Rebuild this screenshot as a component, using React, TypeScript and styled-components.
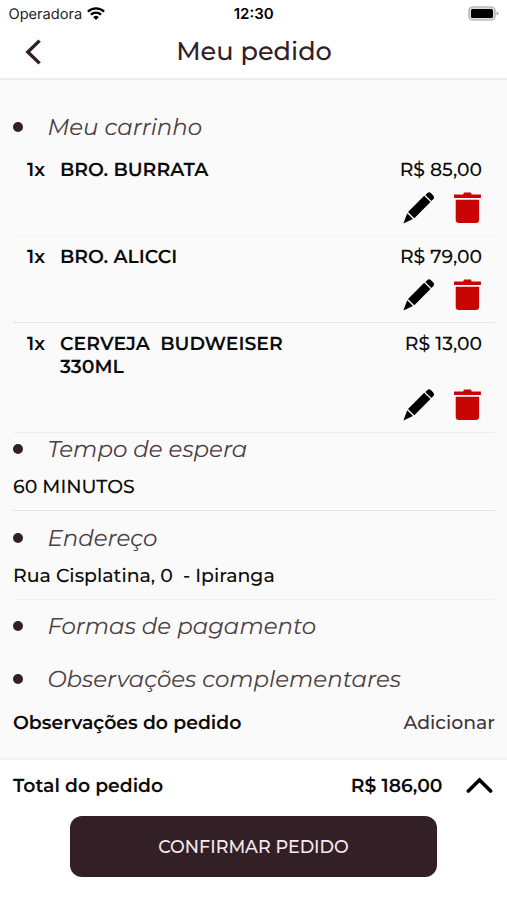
import React from "react";
import styled, { createGlobalStyle } from "styled-components";

const GlobalStyle = createGlobalStyle`
  * { box-sizing: border-box; }
  body {
    margin: 0;
    background: #fff;
    color: #0b0b0b;
    font-family: Montserrat, Inter, "Open Sans", sans-serif;
    text-rendering: geometricPrecision;
  }
`;

const WINE = "#331f26";

const Screen = styled.div`
  display: flex;
  flex-direction: column;
  height: 900px;
  overflow: hidden;
`;

const StatusBar = styled.div`
  display: grid;
  grid-template-columns: 1fr auto 1fr;
  align-items: center;
  height: 27px;
  padding: 0 8px 0 8.5px;
  font-family: Inter, sans-serif;
  font-size: 14.6px;
  color: #222;
`;

const Carrier = styled.div`
  display: flex;
  align-items: center;
  gap: 5px;
`;

const Clock = styled.div`
  font-size: 15px;
  font-weight: 600;
  color: #000;
`;

const BatterySlot = styled.div`
  display: flex;
  justify-content: flex-end;
`;

const Header = styled.header`
  display: grid;
  grid-template-columns: 66px 1fr 66px;
  align-items: center;
  height: 53px;
  border-bottom: 2px solid #ebebeb;
  padding-bottom: 2px;
`;

const BackButton = styled.button`
  display: flex;
  width: 66px;
  padding: 0 0 0 24px;
  border: 0;
  background: none;
`;

const Title = styled.h1`
  margin: 0;
  padding-left: 1px;
  text-align: center;
  font-size: 25.6px;
  line-height: 32px;
  font-weight: 500;
  color: ${WINE};
`;

const Content = styled.main`
  flex: 1;
  padding: 31px 12px 0 13px;
  background: #fafafa;
`;

const Heading = styled.h2<{ $top?: number }>`
  display: flex;
  align-items: center;
  gap: 24.4px;
  height: 32px;
  margin: ${(p) => p.$top ?? 0}px 0 0;
  font-size: 22.9px;
  font-style: italic;
  font-weight: 400;
  white-space: nowrap;
  color: #4b4043;

  &::before {
    content: "";
    width: 10px;
    height: 10px;
    border-radius: 50%;
    background: ${WINE};
  }
`;

const Cart = styled.ul`
  list-style: none;
  margin: 6px 0 0;
  padding: 0;
`;

const CartItem = styled.li<{ $line: string }>`
  display: grid;
  grid-template-columns: 33px 1fr auto;
  row-gap: 11px;
  padding: 9px 13px 11px 14px;
  border-bottom: 1px solid ${(p) => p.$line};
  font-size: 18.85px;
  line-height: 23px;
`;

const Quantity = styled.span`
  font-weight: 600;
`;

const Name = styled.span`
  max-width: 240px;
  font-weight: 600;
  white-space: pre-wrap;
`;

const Price = styled.span`
  font-size: 18.8px;
  font-weight: 500;
`;

const Actions = styled.div`
  grid-column: 1 / -1;
  display: flex;
  justify-content: flex-end;
  gap: 19px;
  height: 32px;
`;

const IconButton = styled.button`
  display: flex;
  padding: 0;
  border: 0;
  background: none;
`;

const Detail = styled.p<{ $line: string }>`
  height: 46px;
  margin: 0;
  border-bottom: 1px solid ${(p) => p.$line};
  font-size: 18.9px;
  line-height: 44px;
  font-weight: 500;
  white-space: pre;
`;

const NotesRow = styled.div`
  display: flex;
  align-items: center;
  justify-content: space-between;
  height: 44px;
  margin-top: 5px;
  font-size: 18.85px;
`;

const NotesLabel = styled.span`
  font-weight: 600;
`;

const AddLink = styled.a`
  font-weight: 500;
  color: #43353a;
`;

const Footer = styled.footer`
  position: relative;
  display: flex;
  flex-direction: column;
  align-items: center;
  height: 140px;
  background: #fff;
  box-shadow: 0 -1px 4px rgba(0, 0, 0, 0.07);
`;

const TotalRow = styled.div`
  display: flex;
  align-items: center;
  width: 100%;
  height: 50px;
  padding: 0 14px 0 13px;
  font-size: 18.8px;
  font-weight: 600;
`;

const TotalLabel = styled.span`
  flex: 1;
`;

const TotalValue = styled.span`
  margin-right: 23.5px;
`;

const ConfirmButton = styled.button`
  width: 367px;
  height: 61px;
  margin: 6px 0 0;
  border: 0;
  border-radius: 12px;
  background: ${WINE};
  color: #f6e9ee;
  font: inherit;
  font-size: 17.55px;
  font-weight: 500;
`;

const WifiIcon = () => (
  <svg width="18" height="14" viewBox="0 0 18 14" fill="none" stroke="#000" strokeWidth="2.3">
    <path d="M.9 4.6a11.7 11.7 0 0 1 16.2 0" />
    <path d="M3.9 7.7a7.4 7.4 0 0 1 10.2 0" />
    <path d="M9 13 6.2 10.2a4 4 0 0 1 5.6 0z" fill="#000" stroke="none" />
  </svg>
);

const BatteryIcon = () => (
  <svg width="31" height="15" viewBox="0 0 31 15">
    <rect x="1" y="1" width="26" height="13" rx="3.8" fill="#ddd" stroke="#bdbdbd" strokeWidth="1.7" />
    <rect x="3" y="3" width="22" height="9" rx="1.6" fill="#000" />
    <path d="M28.6 5.2q2 .7 2 2.2t-2 2.2z" fill="#aaa" />
  </svg>
);

const BackIcon = () => (
  <svg width="18" height="26" viewBox="0 0 18 26" fill="none" stroke={WINE} strokeWidth="3.4">
    <path d="M15.6 1.6 3.8 13l11.8 11.4" />
  </svg>
);

const PencilIcon = () => (
  <svg width="32" height="32" viewBox="0 0 32 32">
    <path d="M22.3 2.9 24.5.9q1.6-1.2 3.4.1l2.3 2.4q1.5 1.9.3 3.5L28.4 9z" />
    <path d="M21.2 3.8 27.5 10.1 11.3 26.3 5 20.1z" />
    <path d="M4.2 21.2 10 27 .4 31.4z" />
  </svg>
);

const TrashIcon = () => (
  <svg width="28" height="32" viewBox="0 0 28 32" fill="#c90404">
    <path d="M0 2.4h9.2L10 .5h6.8l.9 1.9h9.2v3.7H0z" />
    <path d="M1.7 7.8h23.4v20q0 3.2-3.2 3.2H4.9q-3.2 0-3.2-3.2z" />
  </svg>
);

const ChevronUpIcon = () => (
  <svg width="27" height="17" viewBox="0 0 27 17" fill="none" stroke="#000" strokeWidth="3.6">
    <path d="M2.4 14 13.5 3l11.1 11" strokeLinecap="round" />
  </svg>
);

const items = [
  { name: "BRO. BURRATA", price: "R$ 85,00", line: "#f3f3f3" },
  { name: "BRO. ALICCI", price: "R$ 79,00", line: "#e4e4e4" },
  { name: "CERVEJA  BUDWEISER 330ML", price: "R$ 13,00", line: "#efefef" },
];

export default function App() {
  return (
    <Screen>
      <GlobalStyle />
      <StatusBar>
        <Carrier>
          Operadora
          <WifiIcon />
        </Carrier>
        <Clock>12:30</Clock>
        <BatterySlot>
          <BatteryIcon />
        </BatterySlot>
      </StatusBar>
      <Header>
        <BackButton aria-label="Voltar">
          <BackIcon />
        </BackButton>
        <Title>Meu pedido</Title>
      </Header>
      <Content>
        <Heading>Meu carrinho</Heading>
        <Cart>
          {items.map((item) => (
            <CartItem key={item.name} $line={item.line}>
              <Quantity>1x</Quantity>
              <Name>{item.name}</Name>
              <Price>{item.price}</Price>
              <Actions>
                <IconButton aria-label="Editar">
                  <PencilIcon />
                </IconButton>
                <IconButton aria-label="Remover">
                  <TrashIcon />
                </IconButton>
              </Actions>
            </CartItem>
          ))}
        </Cart>
        <Heading>Tempo de espera</Heading>
        <Detail $line="#e2e2e2">60 MINUTOS</Detail>
        <Heading $top={11}>Endereço</Heading>
        <Detail $line="#f1f1f1">{"Rua Cisplatina, 0  - Ipiranga"}</Detail>
        <Heading $top={10}>Formas de pagamento</Heading>
        <Heading $top={21}>Observações complementares</Heading>
        <NotesRow>
          <NotesLabel>Observações do pedido</NotesLabel>
          <AddLink>Adicionar</AddLink>
        </NotesRow>
      </Content>
      <Footer>
        <TotalRow>
          <TotalLabel>Total do pedido</TotalLabel>
          <TotalValue>R$ 186,00</TotalValue>
          <ChevronUpIcon />
        </TotalRow>
        <ConfirmButton>CONFIRMAR PEDIDO</ConfirmButton>
      </Footer>
    </Screen>
  );
}
